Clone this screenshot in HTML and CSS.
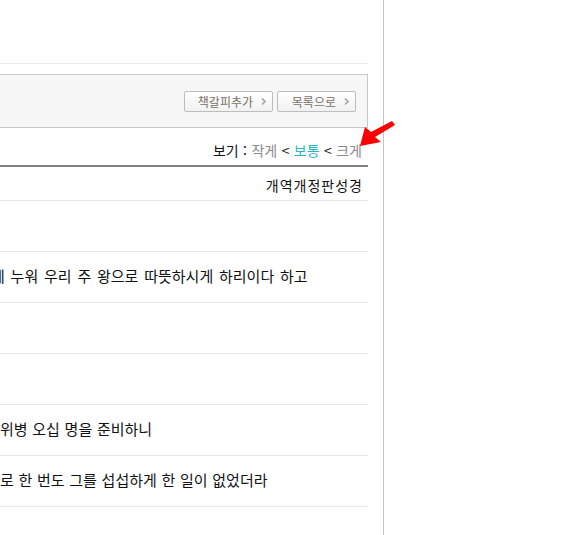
FILE: index.html
```html
<!DOCTYPE html>
<html lang="ko">
<head>
    <meta charset="UTF-8">
    <meta name="viewport" content="width=device-width, initial-scale=1.0">
    <title>개역개정판성경</title>
    <link rel="stylesheet" href="styles.css">
</head>
<body>
    <div class="page">
        <div class="content">
            <div class="top-space"></div>
            <div class="toolbar">
                <button class="tool-button wide">책갈피추가 <svg class="chev" width="5" height="7" viewBox="0 0 5 7"><path d="M1 0.5 L4 3.5 L1 6.5" fill="none" stroke="#a4a4a4" stroke-width="1.6"/></svg></button>
                <button class="tool-button">목록으로 <svg class="chev" width="5" height="7" viewBox="0 0 5 7"><path d="M1 0.5 L4 3.5 L1 6.5" fill="none" stroke="#a4a4a4" stroke-width="1.6"/></svg></button>
            </div>
            <div class="view-size">
                보기 : <span class="size-small">작게</span> <b>&lt;</b> <span class="size-normal">보통</span> <b>&lt;</b> <span class="size-large">크게</span>
            </div>
            <div class="version">개역개정판성경</div>
            <div class="verse"></div>
            <div class="verse"><p class="cut">에 누워 우리 주 왕으로 따뜻하시게 하리이다 하고</p></div>
            <div class="verse"></div>
            <div class="verse"></div>
            <div class="verse"><p>위병 오십 명을 준비하니</p></div>
            <div class="verse"><p>로 한 번도 그를 섭섭하게 한 일이 없었더라</p></div>
            <div class="verse"></div>
        </div>
        <svg class="pointer" width="40" height="32" viewBox="0 0 40 32">
            <polygon points="0,28 5,9 11,14 32,3 35,7 15,19 21,24" fill="#ff0000"/>
        </svg>
    </div>
</body>
</html>
```

FILE: styles.css
```css
body {
    font-family: "Noto Sans CJK KR", "Noto Sans", sans-serif;
    font-size: 14px;
    color: #111;
    margin: 0;
    padding: 0;
    overflow: hidden;
    background: #fff;
}
.page {
    position: relative;
    width: 383px;
    height: 100vh;
    border-right: 1px solid #c3c3c3;
}
.content {
    width: 368px;
}
.top-space {
    height: 64px;
    box-sizing: border-box;
    border-bottom: 1px solid #ebebeb;
}
.toolbar {
    margin-top: 10px;
    height: 54px;
    box-sizing: border-box;
    background-color: #f7f7f7;
    border: 1px solid #c8c8c8;
    border-left: none;
    display: flex;
    justify-content: flex-end;
    align-items: flex-start;
    gap: 4px;
    padding: 16px 11px 0 0;
}
.tool-button {
    font-family: "Noto Sans CJK KR", sans-serif;
    font-size: 12px;
    color: #7a7068;
    height: 21px;
    width: 79px;
    padding: 0 6px 0 0;
    border: 1px solid #bdbdbd;
    border-radius: 2px;
    background: linear-gradient(#ffffff, #f1f1f1);
    display: flex;
    align-items: center;
    justify-content: flex-end;
    gap: 8px;
    line-height: 1;
}
.tool-button.wide {
    width: 89px;
}
.view-size {
    height: 39px;
    box-sizing: border-box;
    text-align: right;
    padding: 12px 6px 0 0;
    line-height: 20px;
    border-bottom: 2px solid #7f7f7f;
    word-spacing: 0.5px;
}
.view-size b {
    font-weight: normal;
    color: #111;
}
.size-small,
.size-large {
    color: #8a8a8a;
}
.size-normal {
    color: #2ab6c6;
}
.version {
    height: 34px;
    box-sizing: border-box;
    text-align: right;
    padding: 8px 5px 0 0;
    line-height: 20px;
    letter-spacing: 1px;
    border-bottom: 1px solid #e6e6e6;
}
.verse {
    height: 51px;
    box-sizing: border-box;
    border-bottom: 1px solid #e6e6e6;
    overflow: hidden;
}
.verse p {
    margin: 0;
    padding-top: 14px;
    font-size: 15px;
    line-height: 20px;
    white-space: nowrap;
    word-spacing: 0.5px;
}
.verse p.cut {
    text-indent: -9px;
    word-spacing: 1.6px;
}
.pointer {
    position: absolute;
    left: 360px;
    top: 118px;
}
```
